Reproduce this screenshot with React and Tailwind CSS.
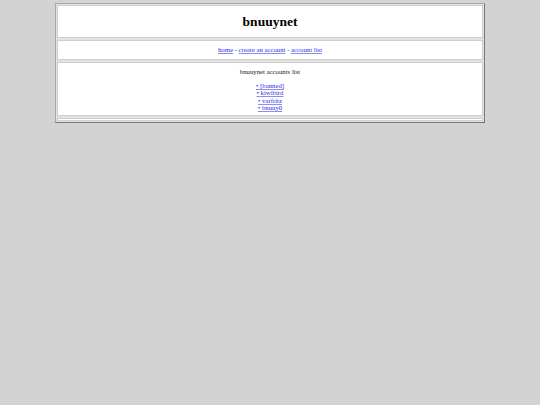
import React from 'react';

const accounts = ['[banned]', 'kiwibird', 'varfritz', 'bnuuy0'];

const Link = ({ children }) => (
  <a href="#" className="text-[#2a2aee] underline decoration-[#8c8cf0] decoration-[0.5px] underline-offset-[1px]">
    {children}
  </a>
);

const App = () => {
  return (
    <div
      className="min-h-screen bg-[#d3d3d3] pt-[3px] text-[#1a1a1a]"
      style={{ fontFamily: '"Liberation Serif", "Times New Roman", serif' }}
    >
      <div className="mx-auto flex w-[430px] flex-col gap-[2px] border border-t-[#a8a8a8] border-l-[#a8a8a8] border-r-[#777] border-b-[#777] bg-[#e2e2e2] p-px">
        {/* titulo */}
        <div className="flex h-[33px] items-center justify-center border border-[#cfcfcf] bg-white">
          <h1 className="text-[13.5px] font-bold leading-none text-black">bnuuynet</h1>
        </div>

        {/* navegação */}
        <div className="flex h-[20px] items-center justify-center border border-[#cfcfcf] bg-white text-[6.75px] leading-[7.6px]">
          <Link>home </Link>
          <span>&nbsp;-&nbsp;</span>
          <Link>create an account</Link>
          <span>&nbsp;-&nbsp;</span>
          <Link>account list</Link>
        </div>

        {/* lista de contas */}
        <div className="flex h-[54px] flex-col items-center border border-[#cfcfcf] bg-white pt-[5px] text-[6.75px] leading-[7.6px]">
          <p>bnuuynet accounts list</p>
          <ul className="mt-[6px] flex flex-col items-center">
            {accounts.map((nome) => (
              <li key={nome}>
                <Link>• {nome}</Link>
              </li>
            ))}
          </ul>
        </div>

        {/* rodapé vazio */}
        <div className="h-[3px] border border-[#cfcfcf] bg-white"></div>
      </div>
    </div>
  );
};

export default App;
